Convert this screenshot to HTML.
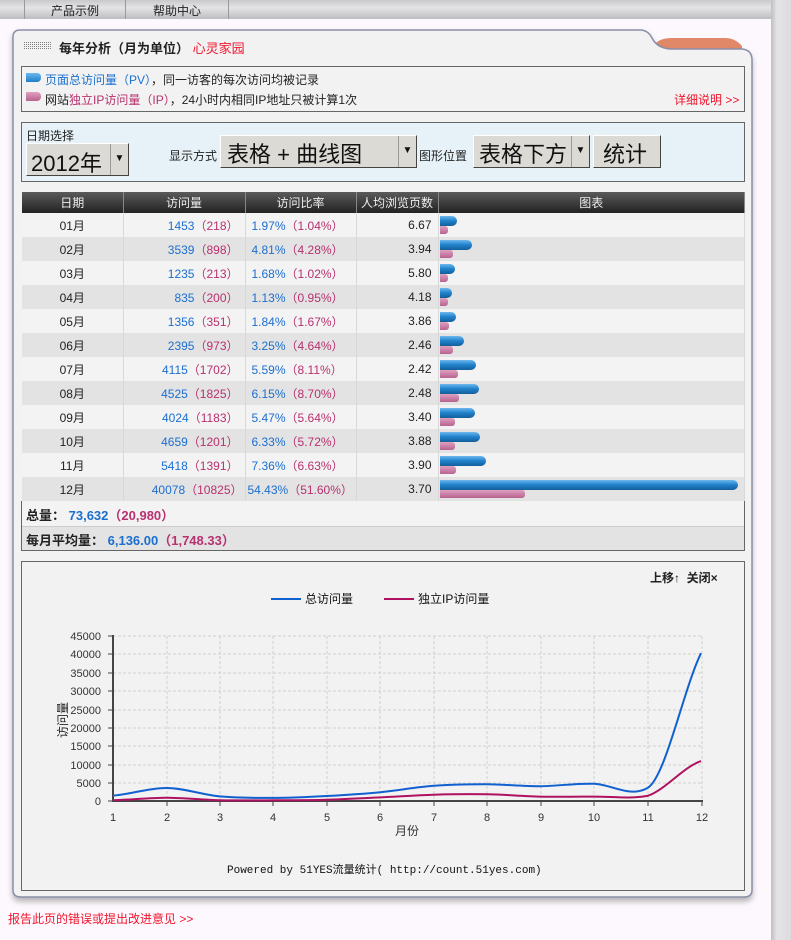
<!DOCTYPE html>
<html><head><meta charset="utf-8"><style>
*{margin:0;padding:0;box-sizing:border-box}
body{width:791px;height:940px;background:#fdf8fd;font-family:"Liberation Sans","Noto Sans CJK SC",sans-serif;font-size:12px;color:#222;position:relative;overflow:hidden}
.abs{position:absolute}
.nav{left:0;top:0;width:771px;height:19px;background:linear-gradient(#c9c9cc,#e4e4e6 40%,#bdbdc0)}
.nav span{position:absolute;top:2px;font-size:12px;color:#222}
.rbar{left:771px;top:0;width:20px;height:940px;background:linear-gradient(90deg,#bfbfc4,#e4e4e6 30%,#dcdce0)}
.box{position:absolute;border:1px solid #666;background:#f2f2f2}
.b{color:#1b6fd0}.p{color:#b8306f}.r{color:#f0142d}
table{border-collapse:collapse;position:absolute;left:22px;top:192px;width:723px;font-size:12px}
th{background:linear-gradient(#5a5a5a,#222);color:#eee;font-weight:normal;height:21px;border-right:1px solid #888}
td{height:24px;border-right:1px solid #d8d8d8;padding:0 6px}
tr:nth-child(even) td{background:#f3f3f3}
tr:nth-child(odd) td{background:#e3e3e3}
td.c{text-align:center}td.rt{text-align:right}
td.g{padding:0;position:relative}
.pv{position:absolute;left:1px;top:3px;height:10px;background:linear-gradient(#6ab8ee,#1f7fc9 50%,#155f9c);border-radius:0 5px 5px 0}
.ip{position:absolute;left:1px;top:13px;height:8px;background:linear-gradient(#e0a0c0,#b8638f);border-radius:0 3px 3px 0}
.sel{position:absolute;background:#dcdad4;border:1px solid;border-color:#fff #444 #444 #fff;color:#111}
.arr{position:absolute;right:0;top:0;width:18px;height:100%;border-left:1px solid #999;font-size:10px;text-align:center}
</style></head><body>
<div class="abs nav"><span style="left:51px">产品示例</span><span style="left:153px">帮助中心</span>
<div class="abs" style="left:24px;top:0;width:1px;height:19px;background:#999"></div>
<div class="abs" style="left:125px;top:0;width:1px;height:19px;background:#999"></div>
<div class="abs" style="left:228px;top:0;width:1px;height:19px;background:#999"></div></div>
<div class="abs rbar"></div>
<svg class="abs" style="left:0;top:0" width="771" height="940">
<defs><filter id="sh"><feDropShadow dx="0" dy="4" stdDeviation="3" flood-color="#888" flood-opacity="0.6"/></filter></defs>
<path d="M655 44 Q660 38 672 38 L725 38 Q735 38 742 46 L742 49 L655 49 Z" fill="#e08868"/>
<path d="M20 30 L640 30 Q648 30 652 38 Q657 48 670 49 L742 49 Q752 50 752 60 L752 890 Q752 897 744 897 L21 897 Q13 897 13 890 L13 37 Q13 30 20 30 Z" fill="#f2f2f2" stroke="#8a8fa8" stroke-width="1.5" filter="url(#sh)"/>
</svg>
<div class="abs" style="left:24px;top:42px;width:28px;height:8px;background:repeating-linear-gradient(90deg,#333 0 1px,transparent 1px 2px);opacity:.6"></div>
<div class="abs" style="left:24px;top:42px;width:28px;height:8px;background:repeating-linear-gradient(0deg,#f2f2f2 0 1px,transparent 1px 2px)"></div>
<div class="abs" style="left:59px;top:38px;font-size:13px;font-weight:bold">每年分析（月为单位）<span class="r" style="font-weight:normal">&nbsp;心灵家园</span></div>
<div class="box" style="left:21px;top:66px;width:724px;height:46px"></div>
<div class="abs" style="left:26px;top:73px;width:15px;height:9px;background:linear-gradient(#6ab8ee,#1f7fc9);border-radius:0 4px 4px 0"></div>
<div class="abs" style="left:26px;top:92px;width:15px;height:9px;background:linear-gradient(#e0a0c0,#b8638f);border-radius:0 4px 4px 0"></div>
<div class="abs" style="left:45px;top:71px"><span class="b">页面总访问量（PV）</span>，同一访客的每次访问均被记录</div>
<div class="abs" style="left:45px;top:91px">网站<span class="p">独立IP访问量（IP）</span>，24小时内相同IP地址只被计算1次</div>
<div class="abs r" style="left:674px;top:91px">详细说明 &gt;&gt;</div>
<div class="box" style="left:21px;top:122px;width:724px;height:60px;background:#e6f2f8"></div>
<div class="abs" style="left:26px;top:127px">日期选择</div>
<div class="sel" style="left:26px;top:143px;width:103px;height:33px;font-size:22px;padding:2px 0 0 4px">2012年<div class="arr" style="line-height:30px">▼</div></div>
<div class="abs" style="left:169px;top:147px">显示方式</div>
<div class="sel" style="left:220px;top:135px;width:197px;height:33px;font-size:22px;padding:1px 0 0 6px">表格 + 曲线图<div class="arr" style="line-height:30px">▼</div></div>
<div class="abs" style="left:419px;top:147px">图形位置</div>
<div class="sel" style="left:473px;top:135px;width:117px;height:33px;font-size:22px;padding:1px 0 0 5px">表格下方<div class="arr" style="line-height:30px">▼</div></div>
<div class="sel" style="left:593px;top:135px;width:68px;height:33px;font-size:22px;padding:1px 0 0 9px">统计</div>
<table>
<tr><th style="width:101px">日期</th><th style="width:122px">访问量</th><th style="width:111px">访问比率</th><th style="width:82px">人均浏览页数</th><th>图表</th></tr>
<tr><td class="c">01月</td><td class="rt"><span class="b">1453</span><span class="p">（218）</span></td><td><span class="b">1.97%</span><span class="p">（1.04%）</span></td><td class="rt">6.67</td><td class="g"><div class="ip" style="width:8px"></div><div class="pv" style="width:17px"></div></td></tr>
<tr><td class="c">02月</td><td class="rt"><span class="b">3539</span><span class="p">（898）</span></td><td><span class="b">4.81%</span><span class="p">（4.28%）</span></td><td class="rt">3.94</td><td class="g"><div class="ip" style="width:13px"></div><div class="pv" style="width:32px"></div></td></tr>
<tr><td class="c">03月</td><td class="rt"><span class="b">1235</span><span class="p">（213）</span></td><td><span class="b">1.68%</span><span class="p">（1.02%）</span></td><td class="rt">5.80</td><td class="g"><div class="ip" style="width:8px"></div><div class="pv" style="width:15px"></div></td></tr>
<tr><td class="c">04月</td><td class="rt"><span class="b">835</span><span class="p">（200）</span></td><td><span class="b">1.13%</span><span class="p">（0.95%）</span></td><td class="rt">4.18</td><td class="g"><div class="ip" style="width:8px"></div><div class="pv" style="width:12px"></div></td></tr>
<tr><td class="c">05月</td><td class="rt"><span class="b">1356</span><span class="p">（351）</span></td><td><span class="b">1.84%</span><span class="p">（1.67%）</span></td><td class="rt">3.86</td><td class="g"><div class="ip" style="width:9px"></div><div class="pv" style="width:16px"></div></td></tr>
<tr><td class="c">06月</td><td class="rt"><span class="b">2395</span><span class="p">（973）</span></td><td><span class="b">3.25%</span><span class="p">（4.64%）</span></td><td class="rt">2.46</td><td class="g"><div class="ip" style="width:13px"></div><div class="pv" style="width:24px"></div></td></tr>
<tr><td class="c">07月</td><td class="rt"><span class="b">4115</span><span class="p">（1702）</span></td><td><span class="b">5.59%</span><span class="p">（8.11%）</span></td><td class="rt">2.42</td><td class="g"><div class="ip" style="width:18px"></div><div class="pv" style="width:36px"></div></td></tr>
<tr><td class="c">08月</td><td class="rt"><span class="b">4525</span><span class="p">（1825）</span></td><td><span class="b">6.15%</span><span class="p">（8.70%）</span></td><td class="rt">2.48</td><td class="g"><div class="ip" style="width:19px"></div><div class="pv" style="width:39px"></div></td></tr>
<tr><td class="c">09月</td><td class="rt"><span class="b">4024</span><span class="p">（1183）</span></td><td><span class="b">5.47%</span><span class="p">（5.64%）</span></td><td class="rt">3.40</td><td class="g"><div class="ip" style="width:15px"></div><div class="pv" style="width:35px"></div></td></tr>
<tr><td class="c">10月</td><td class="rt"><span class="b">4659</span><span class="p">（1201）</span></td><td><span class="b">6.33%</span><span class="p">（5.72%）</span></td><td class="rt">3.88</td><td class="g"><div class="ip" style="width:15px"></div><div class="pv" style="width:40px"></div></td></tr>
<tr><td class="c">11月</td><td class="rt"><span class="b">5418</span><span class="p">（1391）</span></td><td><span class="b">7.36%</span><span class="p">（6.63%）</span></td><td class="rt">3.90</td><td class="g"><div class="ip" style="width:16px"></div><div class="pv" style="width:46px"></div></td></tr>
<tr><td class="c">12月</td><td class="rt" style="padding-right:2px"><span class="b">40078</span><span class="p">（10825）</span></td><td style="padding:0 2px"><span class="b">54.43%</span><span class="p">（51.60%）</span></td><td class="rt">3.70</td><td class="g"><div class="ip" style="width:85px"></div><div class="pv" style="width:298px"></div></td></tr>
</table>
<div class="abs" style="left:21px;top:501px;width:724px;height:50px;border:1px solid #666;border-top:none;background:#f3f3f3"></div>
<div class="abs" style="left:22px;top:526px;width:722px;height:24px;background:#e3e3e3;border-top:1px solid #ccc"></div>
<div class="abs" style="left:26px;top:505px;font-size:13px;font-weight:bold">总量： <span class="b">73,632</span><span class="p">（20,980）</span></div>
<div class="abs" style="left:26px;top:530px;font-size:13px;font-weight:bold">每月平均量： <span class="b">6,136.00</span><span class="p">（1,748.33）</span></div>
<div class="box" style="left:21px;top:561px;width:724px;height:330px"></div>
<div class="abs" style="left:650px;top:569px;font-weight:bold">上移↑&nbsp;&nbsp;关闭×</div>
<svg class="abs" style="left:0;top:0" width="771" height="940" font-family="Liberation Sans,Noto Sans CJK SC,sans-serif">
<line x1="271" y1="599" x2="301" y2="599" stroke="#1060d0" stroke-width="2"/>
<text x="305" y="603" font-size="12" fill="#111">总访问量</text>
<line x1="384" y1="599" x2="414" y2="599" stroke="#b01060" stroke-width="2"/>
<text x="418" y="603" font-size="12" fill="#111">独立IP访问量</text>
<g stroke="#d0d0d0" stroke-dasharray="3,2" stroke-width="1">
<line x1="113" y1="636" x2="702" y2="636"/><line x1="113" y1="654" x2="702" y2="654"/><line x1="113" y1="673" x2="702" y2="673"/><line x1="113" y1="691" x2="702" y2="691"/><line x1="113" y1="710" x2="702" y2="710"/><line x1="113" y1="728" x2="702" y2="728"/><line x1="113" y1="746" x2="702" y2="746"/><line x1="113" y1="765" x2="702" y2="765"/><line x1="113" y1="783" x2="702" y2="783"/>
<line x1="167" y1="636" x2="167" y2="801"/><line x1="220" y1="636" x2="220" y2="801"/><line x1="273" y1="636" x2="273" y2="801"/><line x1="327" y1="636" x2="327" y2="801"/><line x1="380" y1="636" x2="380" y2="801"/><line x1="434" y1="636" x2="434" y2="801"/><line x1="487" y1="636" x2="487" y2="801"/><line x1="541" y1="636" x2="541" y2="801"/><line x1="594" y1="636" x2="594" y2="801"/><line x1="648" y1="636" x2="648" y2="801"/><line x1="702" y1="636" x2="702" y2="801"/>
</g>
<g stroke="#444" stroke-width="2"><line x1="113" y1="635" x2="113" y2="802"/><line x1="112" y1="801" x2="703" y2="801"/></g>
<g stroke="#444" stroke-width="1">
<line x1="108" y1="636" x2="113" y2="636"/><line x1="108" y1="654" x2="113" y2="654"/><line x1="108" y1="673" x2="113" y2="673"/><line x1="108" y1="691" x2="113" y2="691"/><line x1="108" y1="710" x2="113" y2="710"/><line x1="108" y1="728" x2="113" y2="728"/><line x1="108" y1="746" x2="113" y2="746"/><line x1="108" y1="765" x2="113" y2="765"/><line x1="108" y1="783" x2="113" y2="783"/><line x1="108" y1="801" x2="113" y2="801"/>
<line x1="167" y1="801" x2="167" y2="806"/><line x1="220" y1="801" x2="220" y2="806"/><line x1="273" y1="801" x2="273" y2="806"/><line x1="327" y1="801" x2="327" y2="806"/><line x1="380" y1="801" x2="380" y2="806"/><line x1="434" y1="801" x2="434" y2="806"/><line x1="487" y1="801" x2="487" y2="806"/><line x1="541" y1="801" x2="541" y2="806"/><line x1="594" y1="801" x2="594" y2="806"/><line x1="648" y1="801" x2="648" y2="806"/><line x1="702" y1="801" x2="702" y2="806"/>
</g>
<g font-size="11" fill="#333" text-anchor="end">
<text x="101" y="640">45000</text><text x="101" y="658">40000</text><text x="101" y="677">35000</text><text x="101" y="695">30000</text><text x="101" y="714">25000</text><text x="101" y="732">20000</text><text x="101" y="750">15000</text><text x="101" y="769">10000</text><text x="101" y="787">5000</text><text x="101" y="805">0</text>
</g>
<g font-size="11" fill="#333" text-anchor="middle">
<text x="113" y="821">1</text><text x="167" y="821">2</text><text x="220" y="821">3</text><text x="273" y="821">4</text><text x="327" y="821">5</text><text x="380" y="821">6</text><text x="434" y="821">7</text><text x="487" y="821">8</text><text x="541" y="821">9</text><text x="594" y="821">10</text><text x="648" y="821">11</text><text x="702" y="821">12</text>
<text x="407" y="835" font-size="12">月份</text>
</g>
<text transform="translate(67,720) rotate(-90)" font-size="12" fill="#222" text-anchor="middle">访问量</text>
<path fill="none" stroke="#b01060" stroke-width="2" d="M113 800.2 C130.8 799.8 148.7 797.7 166.5 797.7 C184.3 797.7 202.1 799.8 219.9 800.2 C237.7 800.6 255.6 800.4 273.4 800.3 C291.2 800.2 309 800.2 326.8 799.7 C344.6 799.2 362.5 798.2 380.3 797.4 C398.1 796.6 415.9 795.2 433.7 794.7 C451.5 794.2 469.4 794 487.2 794.3 C505 794.6 522.8 796.2 540.6 796.6 C558.4 797 576.3 796.7 594.1 796.6 C611.9 796.5 629.7 799 647.5 795.9 C665.3 790 683.2 767 701 761.1"/>
<path fill="none" stroke="#1060d0" stroke-width="2" d="M113 795.6 C130.8 794.3 148.7 787.9 166.5 788 C184.3 788.1 202.1 794.8 219.9 796.4 C237.7 798 255.6 798 273.4 797.9 C291.2 797.8 309 797 326.8 796 C344.6 795 362.5 793.9 380.3 792.2 C398.1 790.5 415.9 787.1 433.7 785.8 C451.5 784.5 469.4 784.2 487.2 784.3 C505 784.4 522.8 786.3 540.6 786.2 C558.4 786.1 576.3 783 594.1 783.8 C611.9 784.5 629.7 798 647.5 788 C665.3 778 683.2 690 701 653.2"/>
<text x="227" y="873" font-size="11" font-family="Liberation Mono,Noto Sans CJK SC,monospace" fill="#111">Powered by 51YES流量统计( http://count.51yes.com)</text>
</svg>
<div class="abs r" style="left:8px;top:910px">报告此页的错误或提出改进意见 &gt;&gt;</div>
</body></html>
